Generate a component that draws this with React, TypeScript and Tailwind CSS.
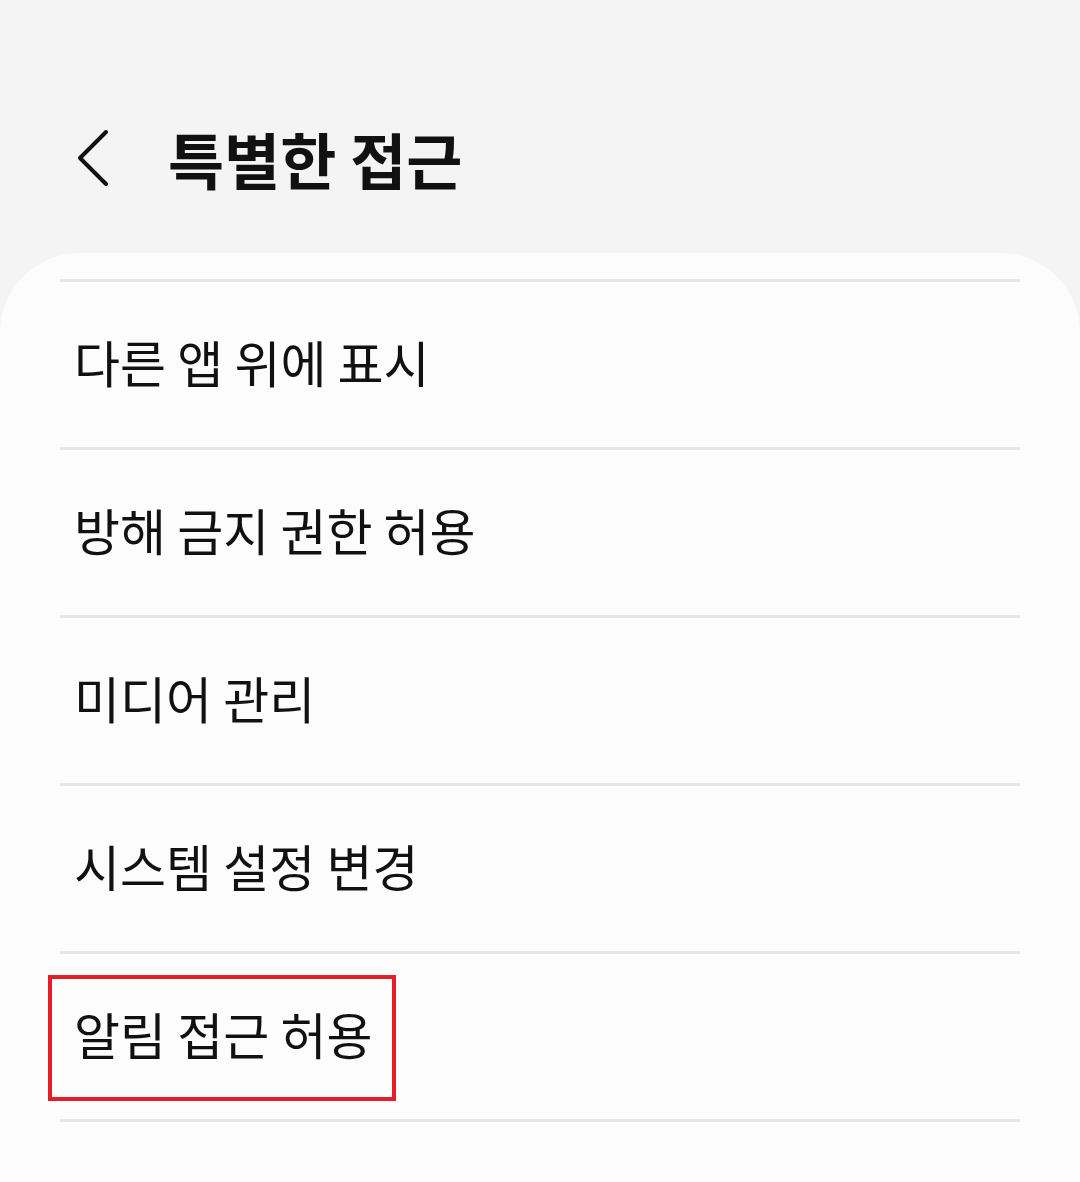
import React from "react";

const items = ["다른 앱 위에 표시", "방해 금지 권한 허용", "미디어 관리", "시스템 설정 변경", "알림 접근 허용"];

export default function App() {
  return (
    <div
      className="w-[1080px] h-[1182px] bg-[#f4f4f4] overflow-hidden flex flex-col"
      style={{ fontFamily: '"Noto Sans CJK KR", "Noto Sans", sans-serif' }}
    >
      <div className="h-[253px] shrink-0 flex items-center pl-[74px] pt-[63px]">
        <svg width="40" height="60" viewBox="0 0 40 60" className="shrink-0">
          <polyline points="32,4 6,30 32,56" fill="none" stroke="#111" strokeWidth="4" strokeLinecap="round" strokeLinejoin="round" />
        </svg>
        <h1 className="ml-[54px] text-[61px] font-bold text-[#111] leading-none">특별한 접근</h1>
      </div>
      <div className="flex-1 bg-[#fcfcfc] rounded-t-[80px] pt-[26px]">
        <div className="mx-[60px] h-[3px] bg-[#e6e6e6]" />
        {items.map((t, i) => (
          <div key={t}>
            <div className="relative h-[165px] flex items-center pl-[14px] pb-[7px] mx-[60px]">
              <span className="text-[50px] text-[#111] leading-none">{t}</span>
              {i === items.length - 1 && (
                <div className="absolute left-[-12px] top-[21px] w-[348px] h-[126px] border-[4px] border-[#e3202a]" />
              )}
            </div>
            <div className="mx-[60px] h-[3px] bg-[#e6e6e6]" />
          </div>
        ))}
      </div>
    </div>
  );
}
